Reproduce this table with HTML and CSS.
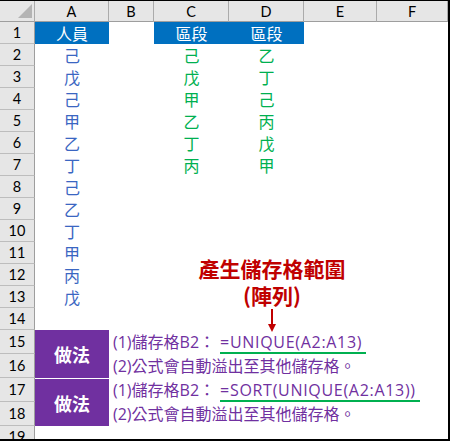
FILE: index.html
```html
<!DOCTYPE html>
<html lang="zh-Hant">
<head>
<meta charset="utf-8">
<title>UNIQUE</title>
<link rel="stylesheet" href="styles.css">
</head>
<body>
<div class="sheet">
  <div class="grid">
    <div class="corner"><span class="tri"></span></div>
    <div class="ch">A</div><div class="ch">B</div><div class="ch">C</div><div class="ch">D</div><div class="ch">E</div><div class="ch">F</div>

    <div class="rh">1</div><div class="cell head">人員</div><div class="cell"></div><div class="cell head">區段</div><div class="cell head">區段</div><div class="cell"></div><div class="cell"></div>
    <div class="rh">2</div><div class="cell blue">己</div><div class="cell"></div><div class="cell green">己</div><div class="cell green">乙</div><div class="cell"></div><div class="cell"></div>
    <div class="rh">3</div><div class="cell blue">戊</div><div class="cell"></div><div class="cell green">戊</div><div class="cell green">丁</div><div class="cell"></div><div class="cell"></div>
    <div class="rh">4</div><div class="cell blue">己</div><div class="cell"></div><div class="cell green">甲</div><div class="cell green">己</div><div class="cell"></div><div class="cell"></div>
    <div class="rh">5</div><div class="cell blue">甲</div><div class="cell"></div><div class="cell green">乙</div><div class="cell green">丙</div><div class="cell"></div><div class="cell"></div>
    <div class="rh">6</div><div class="cell blue">乙</div><div class="cell"></div><div class="cell green">丁</div><div class="cell green">戊</div><div class="cell"></div><div class="cell"></div>
    <div class="rh">7</div><div class="cell blue">丁</div><div class="cell"></div><div class="cell green">丙</div><div class="cell green">甲</div><div class="cell"></div><div class="cell"></div>
    <div class="rh">8</div><div class="cell blue">己</div><div class="cell"></div><div class="cell"></div><div class="cell"></div><div class="cell"></div><div class="cell"></div>
    <div class="rh">9</div><div class="cell blue">乙</div><div class="cell"></div><div class="cell"></div><div class="cell"></div><div class="cell"></div><div class="cell"></div>
    <div class="rh">10</div><div class="cell blue">丁</div><div class="cell"></div><div class="cell"></div><div class="cell"></div><div class="cell"></div><div class="cell"></div>
    <div class="rh">11</div><div class="cell blue">甲</div><div class="cell"></div><div class="cell"></div><div class="cell"></div><div class="cell"></div><div class="cell"></div>
    <div class="rh">12</div><div class="cell blue">丙</div><div class="cell"></div><div class="cell"></div><div class="cell"></div><div class="cell"></div><div class="cell"></div>
    <div class="rh">13</div><div class="cell blue">戊</div><div class="cell"></div><div class="cell"></div><div class="cell"></div><div class="cell"></div><div class="cell"></div>
    <div class="rh">14</div><div class="cell"></div><div class="cell"></div><div class="cell"></div><div class="cell"></div><div class="cell"></div><div class="cell"></div>

    <div class="rh">15</div><div class="how">做法</div><div class="note">(1)儲存格B2：<span class="formula">=UNIQUE(A2:A13)</span></div>
    <div class="rh">16</div><div class="note">(2)公式會自動溢出至其他儲存格。</div>
    <div class="rh">17</div><div class="how second">做法</div><div class="note">(1)儲存格B2：<span class="formula">=SORT(UNIQUE(A2:A13))</span></div>
    <div class="rh">18</div><div class="note">(2)公式會自動溢出至其他儲存格。</div>
    <div class="rh last">19</div><div class="cell"></div><div class="cell"></div><div class="cell"></div><div class="cell"></div><div class="cell"></div><div class="cell"></div>
  </div>

  <div class="callout">
    <div class="callout-text">產生儲存格範圍</div>
    <div class="callout-text">(陣列)</div>
    <svg class="arrow" width="10" height="23" viewBox="0 0 10 23">
      <line x1="5" y1="0" x2="5" y2="16" stroke="#C00000" stroke-width="2"/>
      <polygon points="1,15 9,15 5,23" fill="#C00000"/>
    </svg>
  </div>
</div>
</body>
</html>
```

FILE: styles.css
```css
body {
  margin: 0;
  background: #fff;
  font-family: "Open Sans", "Noto Sans CJK TC", sans-serif;
}

.sheet {
  position: relative;
  width: 450px;
  height: 441px;
  box-sizing: border-box;
  border-top: 1px solid #000;
  border-right: 2px solid #000;
  border-bottom: 2px solid #000;
  overflow: hidden;
}

.grid {
  display: grid;
  grid-template-columns: 35px 74px 45px 75px 75px 73px 71px;
  grid-template-rows: 21px repeat(14, 22px) repeat(4, 24px) 13px;
}

.corner,
.ch,
.rh {
  box-sizing: border-box;
  background: #e6e6e6;
  color: #000;
  font-family: Lato, "Liberation Sans", sans-serif;
  font-size: 14.5px;
  display: flex;
  align-items: center;
  justify-content: center;
}

.corner {
  border-right: 1px solid #ababab;
  border-bottom: 1px solid #9e9e9e;
  align-items: flex-end;
  justify-content: flex-end;
  padding: 0 2px 3px 0;
}

.tri {
  width: 0;
  height: 0;
  border-left: 14px solid transparent;
  border-bottom: 14px solid #b4b4b4;
}

.ch {
  border-right: 1px solid #ababab;
  border-bottom: 1px solid #9e9e9e;
}

.rh {
  border-right: 1px solid #9e9e9e;
  border-bottom: 1px solid #bdbdbd;
}

.rh.last {
  align-items: flex-start;
  line-height: 22px;
  overflow: hidden;
  border-bottom: none;
}

.cell {
  display: flex;
  align-items: center;
  justify-content: center;
  font-family: "Noto Sans CJK TC", sans-serif;
  font-size: 16px;
  line-height: 20px;
}

.head {
  background: #0070c0;
  color: #fff;
}

.blue {
  color: #3a66c2;
}

.green {
  color: #00b050;
}

.how {
  grid-row: span 2;
  box-sizing: border-box;
  background: #7030a0;
  color: #fff;
  font-family: "Noto Sans CJK TC", sans-serif;
  font-weight: bold;
  font-size: 18px;
  display: flex;
  align-items: center;
  justify-content: center;
}

.how.second {
  border-top: 1px solid #fff;
}

.note {
  grid-column: span 5;
  display: flex;
  align-items: center;
  padding-left: 4px;
  color: #7030a0;
  font-size: 16px;
  line-height: 20px;
  white-space: nowrap;
}

.formula {
  align-self: flex-end;
  line-height: 20px;
  margin-left: 5px;
  padding-right: 4px;
  letter-spacing: 0.7px;
  border-bottom: 2px solid #00b050;
}

.callout {
  position: absolute;
  left: 172px;
  top: 254px;
  width: 200px;
  display: flex;
  flex-direction: column;
  align-items: center;
  color: #c00000;
  font-family: "Noto Sans CJK TC", sans-serif;
  font-weight: bold;
  font-size: 21px;
  line-height: 27px;
}

.arrow {
  display: block;
}
```
